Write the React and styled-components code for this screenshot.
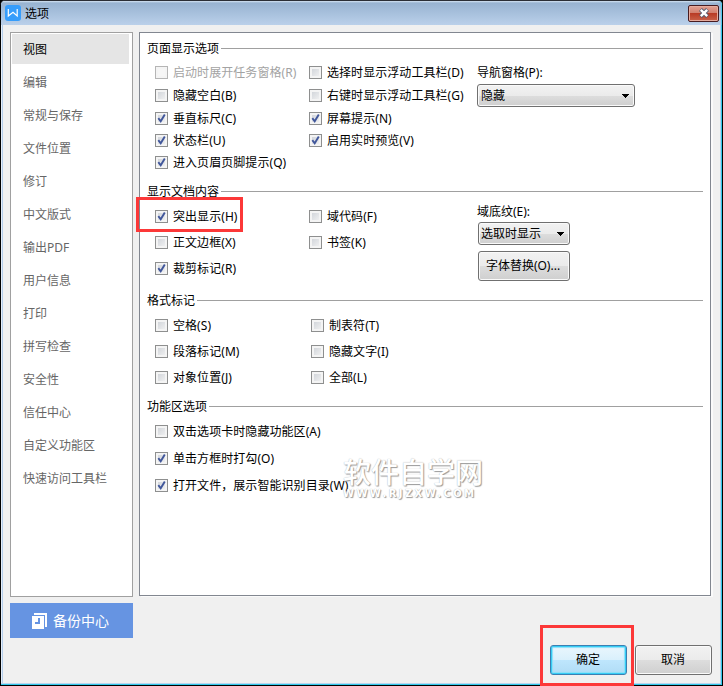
import React, { useState } from 'react';
import styled, { createGlobalStyle } from 'styled-components';

const navItems = [
  '视图', '编辑', '常规与保存', '文件位置', '修订', '中文版式', '输出PDF',
  '用户信息', '打印', '拼写检查', '安全性', '信任中心', '自定义功能区', '快速访问工具栏',
];

const pageOptions = [
  { label: '启动时展开任务窗格(R)', disabled: true },
  { label: '选择时显示浮动工具栏(D)' },
  { label: '隐藏空白(B)' },
  { label: '右键时显示浮动工具栏(G)' },
  { label: '垂直标尺(C)', checked: true },
  { label: '屏幕提示(N)', checked: true },
  { label: '状态栏(U)', checked: true },
  { label: '启用实时预览(V)', checked: true },
  { label: '进入页眉页脚提示(Q)', checked: true },
];

const contentOptions = [
  { label: '突出显示(H)', checked: true, marked: true },
  { label: '域代码(F)' },
  { label: '正文边框(X)' },
  { label: '书签(K)' },
  { label: '裁剪标记(R)', checked: true },
];

const formatOptions = [
  { label: '空格(S)' },
  { label: '制表符(T)' },
  { label: '段落标记(M)' },
  { label: '隐藏文字(I)' },
  { label: '对象位置(J)' },
  { label: '全部(L)' },
];

const ribbonOptions = [
  { label: '双击选项卡时隐藏功能区(A)' },
  { label: '单击方框时打勾(O)', checked: true },
  { label: '打开文件，展示智能识别目录(W)', checked: true },
];

const Check = ({ option }) => {
  const [checked, setChecked] = useState(!!option.checked);

  return (
    <CheckLabel
      $disabled={option.disabled}
      onClick={() => !option.disabled && setChecked(!checked)}
    >
      <CheckBox $disabled={option.disabled}>
        {checked && (
          <svg width="11" height="11" viewBox="0 0 11 11">
            <path d="M2.3 5.2 L4.7 8.3 L8.8 1.6" fill="none" stroke="#41579b" strokeWidth="1.9" />
          </svg>
        )}
      </CheckBox>
      <span>{option.label}</span>
      {option.marked && <OptionMark />}
    </CheckLabel>
  );
};

const Checks = ({ options, ...grid }) => (
  <CheckGrid {...grid}>
    {options.map((option) => (
      <Check key={option.label} option={option} />
    ))}
  </CheckGrid>
);

const Arrow = () => (
  <svg width="8" height="4" viewBox="0 0 8 4" shapeRendering="crispEdges">
    <path d="M0 0h8L4 4z" fill="#000" />
  </svg>
);

const App = () => {
  const [active, setActive] = useState('视图');

  return (
    <>
      <GlobalStyle />
      <Window>
        <TitleBar>
          <svg width="16" height="16" viewBox="0 0 16 16">
            <rect width="16" height="16" rx="3" fill="#369dfb" />
            <path d="M3.3 4v7L8 7.2l4.2 3.8V4" fill="none" stroke="#fff" strokeWidth="1.2" />
          </svg>
          <Title>选项</Title>
          <CloseButton aria-label="关闭">
            <svg width="12" height="10" viewBox="0 0 12 10">
              <path d="M2.5 1.5l7 7M9.5 1.5l-7 7" stroke="#535a70" strokeWidth="4.2" />
              <path d="M2.8 1.8l6.4 6.4M9.2 1.8L2.8 8.2" stroke="#fff" strokeWidth="2.4" />
            </svg>
          </CloseButton>
        </TitleBar>

        <Main>
          <LeftColumn>
            <NavList>
              {navItems.map((item) => (
                <NavItem key={item} $active={item === active} onClick={() => setActive(item)}>
                  {item}
                </NavItem>
              ))}
            </NavList>
            <BackupButton>
              <svg width="15" height="16" viewBox="0 0 15 16" shapeRendering="crispEdges">
                <path d="M2 0h13v14h-2V2H2z" fill="#fff" />
                <path d="M0 3h12v13H0z" fill="#fff" />
                <path d="M6 5h2v6H3V9h3z" fill="#6694e2" />
              </svg>
              备份中心
            </BackupButton>
          </LeftColumn>

          <RightColumn>
            <Panel>
              <Group $height={143}>
                <Legend>页面显示选项</Legend>
                <GroupBody $top={10}>
                  <Checks options={pageOptions} $first={154} $width={322} $rows="23px 23px 22px 22px 13px" />
                  <Side>
                    <SideLabel $height={18}>导航窗格(P):</SideLabel>
                    <Select $width={158}>隐藏<Arrow /></Select>
                  </Side>
                </GroupBody>
              </Group>

              <Group $height={109}>
                <Legend>显示文档内容</Legend>
                <GroupBody $top={11}>
                  <Checks options={contentOptions} $first={154} $width={322} $rows="26px 26px 13px" />
                  <Side>
                    <SideLabel $height={12} $raised>域底纹(E):</SideLabel>
                    <Select $width={92} $inset>选取时显示<Arrow /></Select>
                    <FontButton>字体替换(O)...</FontButton>
                  </Side>
                </GroupBody>
              </Group>

              <Group $height={106}>
                <Legend>格式标记</Legend>
                <GroupBody $top={11}>
                  <Checks options={formatOptions} $first={156} $width={322} $rows="26px 26px 13px" />
                </GroupBody>
              </Group>

              <Group $height={110}>
                <Legend>功能区选项</Legend>
                <GroupBody $top={11}>
                  <Checks options={ribbonOptions} $first={322} $width={322} $single $rows="27px 27px 13px" />
                </GroupBody>
              </Group>

              <Watermark>
                <WatermarkName>软件自学网</WatermarkName>
                <WatermarkUrl>WWW.RJZXW.COM</WatermarkUrl>
              </Watermark>
            </Panel>

            <Footer>
              <DialogButton $primary>
                确定
                <ConfirmMark />
              </DialogButton>
              <DialogButton>取消</DialogButton>
            </Footer>
          </RightColumn>
        </Main>
      </Window>
    </>
  );
};

const GlobalStyle = createGlobalStyle`
  * {
    box-sizing: border-box;
  }

  body {
    margin: 0;
    background: #000;
    font: 12px/16px "Noto Sans", "Noto Sans CJK SC", sans-serif;
    color: #000;
    overflow: hidden;
  }

  button {
    font: inherit;
    color: inherit;
    padding: 0;
  }

  svg {
    display: block;
    flex: none;
  }
`;

const Window = styled.div`
  width: 723px;
  height: 686px;
  display: flex;
  flex-direction: column;
  background: #f0f0f0;
  border: 1px solid #000;
  border-top-color: #2b2e35;
  border-radius: 5px 5px 0 0;
  box-shadow: inset -1px -1px 0 #30c8ea, inset -2px -2px 0 #b8d4ee, inset 1px 0 0 #e4eefa, inset 2px 0 0 #b4cdea;
`;

const TitleBar = styled.div`
  height: 24px;
  display: flex;
  align-items: center;
  padding: 0 3px 0 4px;
  background: linear-gradient(#d5e4f3 0, #98b3d1 2px, #bad0ea 100%);
  border-radius: 4px 4px 0 0;
  box-shadow: inset -1px 0 0 #51c9ed;
`;

const Title = styled.span`
  flex: 1;
  margin-left: 4px;
  padding-top: 2px;
`;

const CloseButton = styled.button`
  width: 31px;
  height: 17px;
  display: flex;
  align-items: center;
  justify-content: center;
  border: 1px solid #481c20;
  border-radius: 2px;
  background: linear-gradient(#e2a192 0%, #d28070 45%, #b93b26 50%, #c9624a 100%);
  box-shadow: inset 0 0 0 1px #e6ab9d;
`;

const Main = styled.div`
  flex: 1;
  display: flex;
  gap: 6px;
  padding: 7px 10px 0 9px;
`;

const LeftColumn = styled.div`
  width: 123px;
`;

const NavList = styled.div`
  height: 565px;
  display: flex;
  flex-direction: column;
  gap: 3px;
  padding: 1px 3px 0 1px;
  background: #fff;
  border: 1px solid #a0a0a0;
`;

const NavItem = styled.div`
  height: 30px;
  padding-left: 11px;
  line-height: 32px;
  color: ${(props) => (props.$active ? '#000' : '#666')};
  background: ${(props) => (props.$active ? '#e5e5e5' : 'transparent')};
`;

const BackupButton = styled.button`
  width: 100%;
  height: 35px;
  margin-top: 6px;
  display: flex;
  align-items: center;
  gap: 6px;
  padding-left: 22px;
  border: none;
  background: #6694e2;
  color: #fff;
  font-size: 14px;
`;

const RightColumn = styled.div`
  flex: 1;
  min-width: 0;
`;

const Panel = styled.div`
  position: relative;
  width: 572px;
  height: 564px;
  padding: 7px 7px 0;
  background: #fff;
  border: 1px solid #828790;
  box-shadow: 2px 1px 0 #fafafa;
`;

const Group = styled.section`
  height: ${(props) => props.$height}px;
`;

const Legend = styled.div`
  height: 16px;
  display: flex;
  align-items: flex-start;
  gap: 2px;
  line-height: 18px;

  &::after {
    content: '';
    flex: 1;
    height: 1px;
    margin-top: 8px;
    background: #a0a0a0;
  }
`;

const GroupBody = styled.div`
  display: flex;
  padding: ${(props) => props.$top}px 0 0 8px;
`;

const CheckGrid = styled.div`
  width: ${(props) => props.$width}px;
  display: grid;
  grid-template-columns: ${(props) => (props.$single ? '1fr' : `${props.$first}px 1fr`)};
  grid-template-rows: ${(props) => props.$rows};
`;

const CheckLabel = styled.div`
  position: relative;
  height: 13px;
  display: flex;
  align-items: center;
  gap: 5px;
  white-space: nowrap;
  letter-spacing: 0.06px;
  color: ${(props) => (props.$disabled ? '#a3a3a3' : '#000')};
`;

const CheckBox = styled.span`
  width: 13px;
  height: 13px;
  flex: none;
  border: 1px solid ${(props) => (props.$disabled ? '#b5b5b5' : '#8e8f8f')};
  background: ${(props) => (props.$disabled ? '#f6f6f6' : 'linear-gradient(135deg, #cbcfd5, #f6f6f6)')};
  box-shadow: inset 0 0 0 2px #f4f4f4;
`;

const OptionMark = styled.span`
  position: absolute;
  left: -19px;
  top: -13px;
  width: 107px;
  height: 35px;
  border: 3px solid #fc3838;
`;

const Side = styled.div`
  display: flex;
  flex-direction: column;
`;

const SideLabel = styled.div`
  height: ${(props) => props.$height}px;
  line-height: ${(props) => (props.$raised ? 4 : 14)}px;
`;

const Raised = styled.button`
  border: 1px solid #707070;
  border-radius: 3px;
  background: linear-gradient(#f2f2f2 0%, #ebebeb 50%, #dddddd 51%, #cfcfcf 100%);
  box-shadow: inset 0 0 0 1px #fafafa;
`;

const Select = styled(Raised)`
  width: ${(props) => props.$width}px;
  height: 23px;
  margin-left: ${(props) => (props.$inset ? 1 : 0)}px;
  display: flex;
  align-items: center;
  justify-content: space-between;
  padding: 0 5px 0 ${(props) => (props.$inset ? 2 : 3)}px;
`;

const FontButton = styled(Raised)`
  width: 92px;
  height: 30px;
  margin: 6px 0 0 1px;
  padding-right: 2px;
`;

const Watermark = styled.div`
  position: absolute;
  left: 203px;
  top: 423px;
  color: #fff;
  text-shadow: 1px 1px 1px #999, 0 0 1px #aaa;
`;

const WatermarkName = styled.div`
  font-size: 28px;
  font-weight: 500;
  line-height: 32px;
`;

const WatermarkUrl = styled.div`
  font: bold 10px/12px "DejaVu Sans", sans-serif;
  letter-spacing: 2.4px;
`;

const Footer = styled.div`
  display: flex;
  justify-content: flex-end;
  gap: 8px;
  padding-top: 49px;
`;

const DialogButton = styled(Raised)`
  position: relative;
  width: 77px;
  height: 30px;
  padding-right: 1px;
  ${(props) => props.$primary && `
    border-color: #3c7fb1;
    background: linear-gradient(#eaf6fd 0%, #d9f0fc 50%, #bee6fd 51%, #b0dcf5 100%);
    box-shadow: inset 0 0 0 1px #35ccf5, inset 0 0 1px 2px #8be0f9;
  `}
`;

const ConfirmMark = styled.span`
  position: absolute;
  left: -11px;
  top: -21px;
  width: 94px;
  height: 61px;
  border: 3px solid #fc3838;
`;

export default App;
